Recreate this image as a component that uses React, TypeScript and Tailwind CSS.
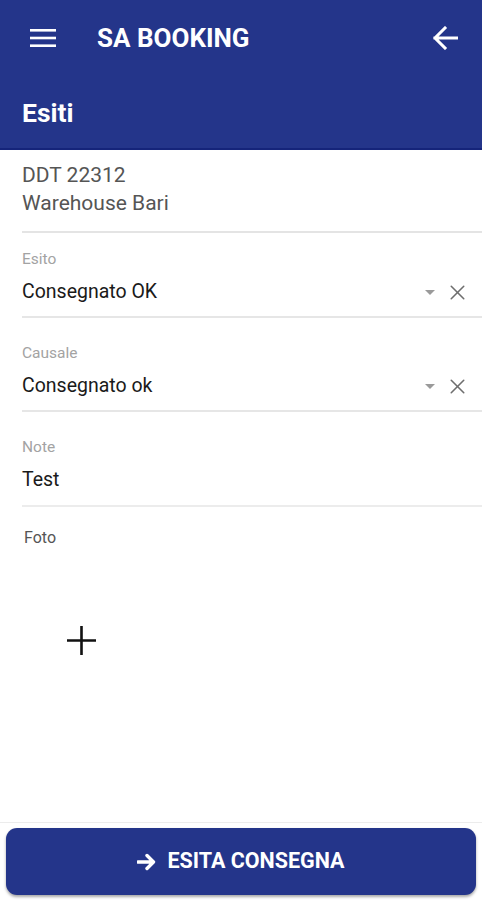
import { X } from 'lucide-react'

const FONT = { fontFamily: 'Roboto, "Liberation Sans", sans-serif' }

function MenuIcon() {
  return (
    <svg width="26" height="18" viewBox="0 0 26 18" className="block">
      <rect x="0" y="0" width="26" height="2.6" fill="white" />
      <rect x="0" y="7.7" width="26" height="2.6" fill="white" />
      <rect x="0" y="15.4" width="26" height="2.6" fill="white" />
    </svg>
  )
}

function BackIcon() {
  return (
    <svg width="26" height="24" viewBox="0 0 26 24" className="block">
      <path d="M25 12H3M13 2L3 12l10 10" stroke="white" strokeWidth="3" fill="none" strokeLinecap="square" />
    </svg>
  )
}

function SelectField({ label, value, first }: { label: string; value: string; first?: boolean }) {
  return (
    <div className={`ml-[22px] border-b-2 border-[#e6e6e6] pb-[12px] ${first ? 'pt-[18px]' : 'pt-[27px]'}`}>
      <div className="text-[15.5px] leading-[16px] text-[#a3a3a3]">{label}</div>
      <div className="mt-[13px] flex h-[24px] items-center">
        <span className="flex-1 text-[19.5px] leading-[24px] text-[#1a1a1a]">{value}</span>
        <span className="mr-[10px] h-0 w-0 border-x-[5px] border-t-[5px] border-x-transparent border-t-[#9a9a9a]" />
        <X className="mr-[12px] h-[25px] w-[25px] text-[#6e6e6e]" strokeWidth={1.5} />
      </div>
    </div>
  )
}

export default function App() {
  return (
    <div className="flex h-[900px] w-[482px] flex-col bg-white" style={FONT}>
      {/* Header */}
      <div className="h-[150px] border-b-2 border-[#15247a] bg-[#24358a] text-white">
        <div className="flex h-[76px] items-center">
          <div className="ml-[30px]">
            <MenuIcon />
          </div>
          <h1 className="ml-[41px] flex-1 text-[26px] font-bold leading-[32px]">SA BOOKING</h1>
          <div className="mr-[24px]">
            <BackIcon />
          </div>
        </div>
        <div className="pl-[22px] pt-[21px] text-[26.5px] font-bold leading-[32px]">Esiti</div>
      </div>

      {/* Content */}
      <div className="flex-1">
        <div className="ml-[22px] border-b-2 border-[#e4e4e4] pb-[14px] pt-[11px] text-[21px] leading-[28px] text-[#555]">
          <div>DDT 22312</div>
          <div>Warehouse Bari</div>
        </div>

        <SelectField label="Esito" value="Consegnato OK" first />
        <SelectField label="Causale" value="Consegnato ok" />

        <div className="ml-[22px] border-b-2 border-[#ececec] pb-[13px] pt-[27px]">
          <div className="text-[15.5px] leading-[16px] text-[#a3a3a3]">Note</div>
          <div className="mt-[13px] text-[19.5px] leading-[24px] text-[#1a1a1a]">Test</div>
        </div>

        <div className="pl-[24px] pt-[23px]">
          <div className="text-[16px] leading-[16px] text-[#555]">Foto</div>
          <div className="ml-[42px] mt-[79px]">
            <svg width="31" height="31" viewBox="0 0 31 31" className="block">
              <path d="M15.5 1v29M1 15.5h29" stroke="#111" strokeWidth="2.6" />
            </svg>
          </div>
        </div>
      </div>

      {/* Footer */}
      <div className="border-t border-[#ececec] px-[6px] pb-[5px] pt-[5px]">
        <button className="flex h-[67px] w-full items-center justify-center gap-[10px] rounded-[11px] bg-[#24358a] text-[21.5px] font-bold text-white shadow-[0_2px_3px_rgba(0,0,0,0.35)]">
          <svg width="20" height="18" viewBox="0 0 20 18" className="block">
            <path d="M1 9h15M10 2.5L16.5 9 10 15.5" stroke="white" strokeWidth="3.4" fill="none" strokeLinecap="round" strokeLinejoin="round" />
          </svg>
          ESITA CONSEGNA
        </button>
      </div>
    </div>
  )
}
